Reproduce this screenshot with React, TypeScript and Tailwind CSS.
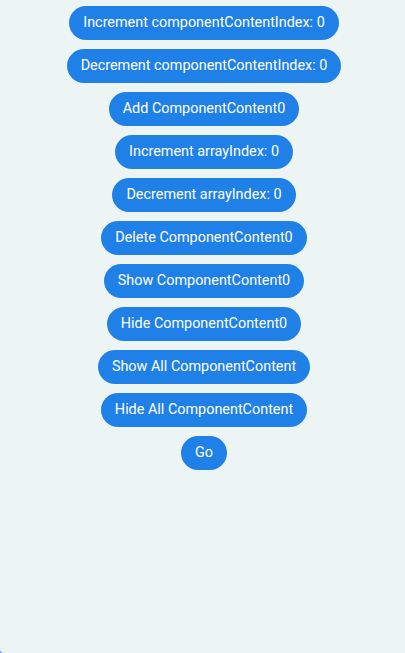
const buttons = [
  'Increment componentContentIndex: 0',
  'Decrement componentContentIndex: 0',
  'Add ComponentContent0',
  'Increment arrayIndex: 0',
  'Decrement arrayIndex: 0',
  'Delete ComponentContent0',
  'Show ComponentContent0',
  'Hide ComponentContent0',
  'Show All ComponentContent',
  'Hide All ComponentContent',
  'Go',
]

export default function App() {
  return (
    <div className="h-[653px] w-[405px] bg-[#5aa0e8]">
      <div
        className="h-full w-full bg-[#edf5f4] rounded-bl-[4px] flex flex-col items-center gap-[9px] pt-[6px] pl-[3px]"
        style={{ fontFamily: 'Roboto, "Noto Sans", sans-serif' }}
      >
        {buttons.map((label) => (
          <button
            key={label}
            className="h-[34px] px-[14px] rounded-full bg-[#1f80e8] text-white text-[14.4px] leading-none whitespace-nowrap"
          >
            {label}
          </button>
        ))}
      </div>
    </div>
  )
}
